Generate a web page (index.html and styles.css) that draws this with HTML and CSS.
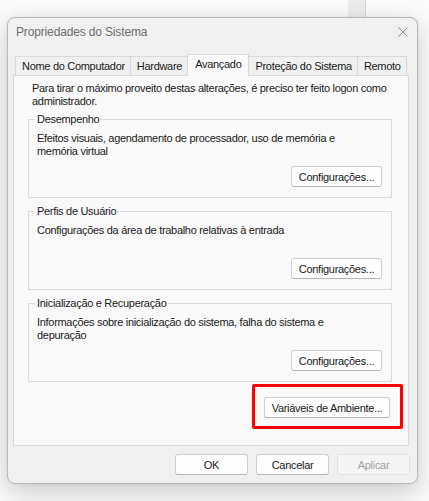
FILE: index.html
```html
<!DOCTYPE html>
<html lang="pt-BR">
<head>
<meta charset="utf-8">
<title>Propriedades do Sistema</title>
<link rel="stylesheet" href="styles.css">
</head>
<body>
<div class="backwin"></div>
<div class="dialog">
  <div class="titlebar">
    <span class="title">Propriedades do Sistema</span>
    <svg class="close" width="10" height="10" viewBox="0 0 10 10"><path d="M0.5 0.5L9.5 9.5M9.5 0.5L0.5 9.5" stroke="#8a8a8a" stroke-width="1" fill="none"/></svg>
  </div>
  <div class="tabs">
    <div class="tab">Nome do Computador</div>
    <div class="tab">Hardware</div>
    <div class="tab active">Avançado</div>
    <div class="tab">Proteção do Sistema</div>
    <div class="tab">Remoto</div>
  </div>
  <div class="panel">
    <p class="intro">Para tirar o máximo proveito destas alterações, é preciso ter feito logon como administrador.</p>
    <fieldset class="group">
      <legend>Desempenho</legend>
      <p class="desc">Efeitos visuais, agendamento de processador, uso de memória e memória virtual</p>
      <div class="btnrow"><button class="btn cfg">Configurações...</button></div>
    </fieldset>
    <fieldset class="group">
      <legend>Perfis de Usuário</legend>
      <p class="desc">Configurações da área de trabalho relativas à entrada</p>
      <div class="btnrow"><button class="btn cfg">Configurações...</button></div>
    </fieldset>
    <fieldset class="group">
      <legend>Inicialização e Recuperação</legend>
      <p class="desc">Informações sobre inicialização do sistema, falha do sistema e depuração</p>
      <div class="btnrow"><button class="btn cfg">Configurações...</button></div>
    </fieldset>
    <div class="envrow">
      <div class="highlight"><button class="btn env">Variáveis de Ambiente...</button></div>
    </div>
  </div>
  <div class="footer">
    <button class="btn foot">OK</button>
    <button class="btn foot">Cancelar</button>
    <button class="btn foot" disabled>Aplicar</button>
  </div>
</div>
</body>
</html>
```
FILE: styles.css
```css
* { box-sizing: border-box; }
html, body { margin: 0; padding: 0; }
body {
  width: 429px;
  height: 501px;
  overflow: hidden;
  background: #fbfbfb;
  padding: 17px 0 0 7px;
  position: relative;
  font-family: "Liberation Sans", Arial, sans-serif;
  font-size: 11px;
  letter-spacing: -0.3px;
  color: #1a1a1a;
}
.backwin {
  position: absolute;
  left: 348px;
  top: 0;
  width: 18px;
  height: 17px;
  background: #ededed;
  border-right: 1px solid #d4d4d4;
}
.dialog {
  position: relative;
  width: 411px;
  height: 467px;
  background: #f0f0f0;
  border: 1px solid #b9b9b9;
  border-radius: 8px;
  box-shadow: 0 8px 26px rgba(0, 0, 0, 0.2), 0 0 3px rgba(0, 0, 0, 0.08);
  display: flex;
  flex-direction: column;
}
.titlebar {
  height: 36px;
  display: flex;
  align-items: flex-start;
  justify-content: space-between;
  padding: 6px 9px 0 8px;
}
.title {
  font-size: 12px;
  letter-spacing: -0.15px;
  line-height: 16px;
  color: #6e6e6e;
}
.close { margin-top: 3px; }
.tabs {
  display: flex;
  align-items: flex-end;
  height: 21px;
  padding-left: 7px;
  position: relative;
  z-index: 1;
}
.tab {
  height: 19px;
  line-height: 18px;
  padding: 0 5px 0 6px;
  border: 1px solid #d9d9d9;
  border-bottom: none;
  background: #f0f0f0;
  margin-left: -1px;
  white-space: nowrap;
}
.tab:first-child { margin-left: 0; }
.tab.active {
  height: 22px;
  line-height: 19px;
  padding: 0 7px 2px 7px;
  margin-bottom: -1px;
  background: #f9f9f9;
  position: relative;
}
.panel {
  margin-left: 5px;
  width: 396px;
  height: 371px;
  background: #f9f9f9;
  border: 1px solid #dadada;
  padding: 6px 16px 0 14px;
  display: flex;
  flex-direction: column;
}
.intro {
  margin: 0 0 5px 4px;
  line-height: 13px;
}
.group {
  margin: 0;
  border: 1px solid #dcdcdc;
  padding: 0 9px 10px 8px;
  min-width: 0;
}
.group + .group { margin-top: 7px; }
.group legend {
  padding: 0 1px 0 2px;
  margin-left: -2px;
  line-height: 13px;
}
.desc {
  margin: 6px 0 0 0;
  width: 312px;
  height: 26px;
  line-height: 13px;
}
.btnrow {
  display: flex;
  justify-content: flex-end;
  margin-top: 8px;
}
.btn {
  font-family: inherit;
  font-size: 11px;
  letter-spacing: -0.3px;
  color: #1a1a1a;
  background: #fdfdfd;
  border: 1px solid #d0d0d0;
  border-bottom-color: #b5b5b5;
  border-radius: 3px;
  height: 21px;
  padding: 0;
  margin: 0;
}
.cfg { width: 91px; }
.envrow {
  display: flex;
  justify-content: flex-end;
  margin: 2px -11px 0 0;
}
.highlight {
  border: 3px solid #ff0000;
  border-radius: 2px;
  padding: 10px 10px 8px 9px;
}
.env { width: 126px; display: block; }
.footer {
  display: flex;
  justify-content: flex-end;
  gap: 8px;
  padding: 8px 7px 0 0;
}
.foot { width: 73px; }
.foot:disabled {
  color: #a3a3a3;
  background: #f5f5f5;
  border-color: #e3e3e3;
}
```
